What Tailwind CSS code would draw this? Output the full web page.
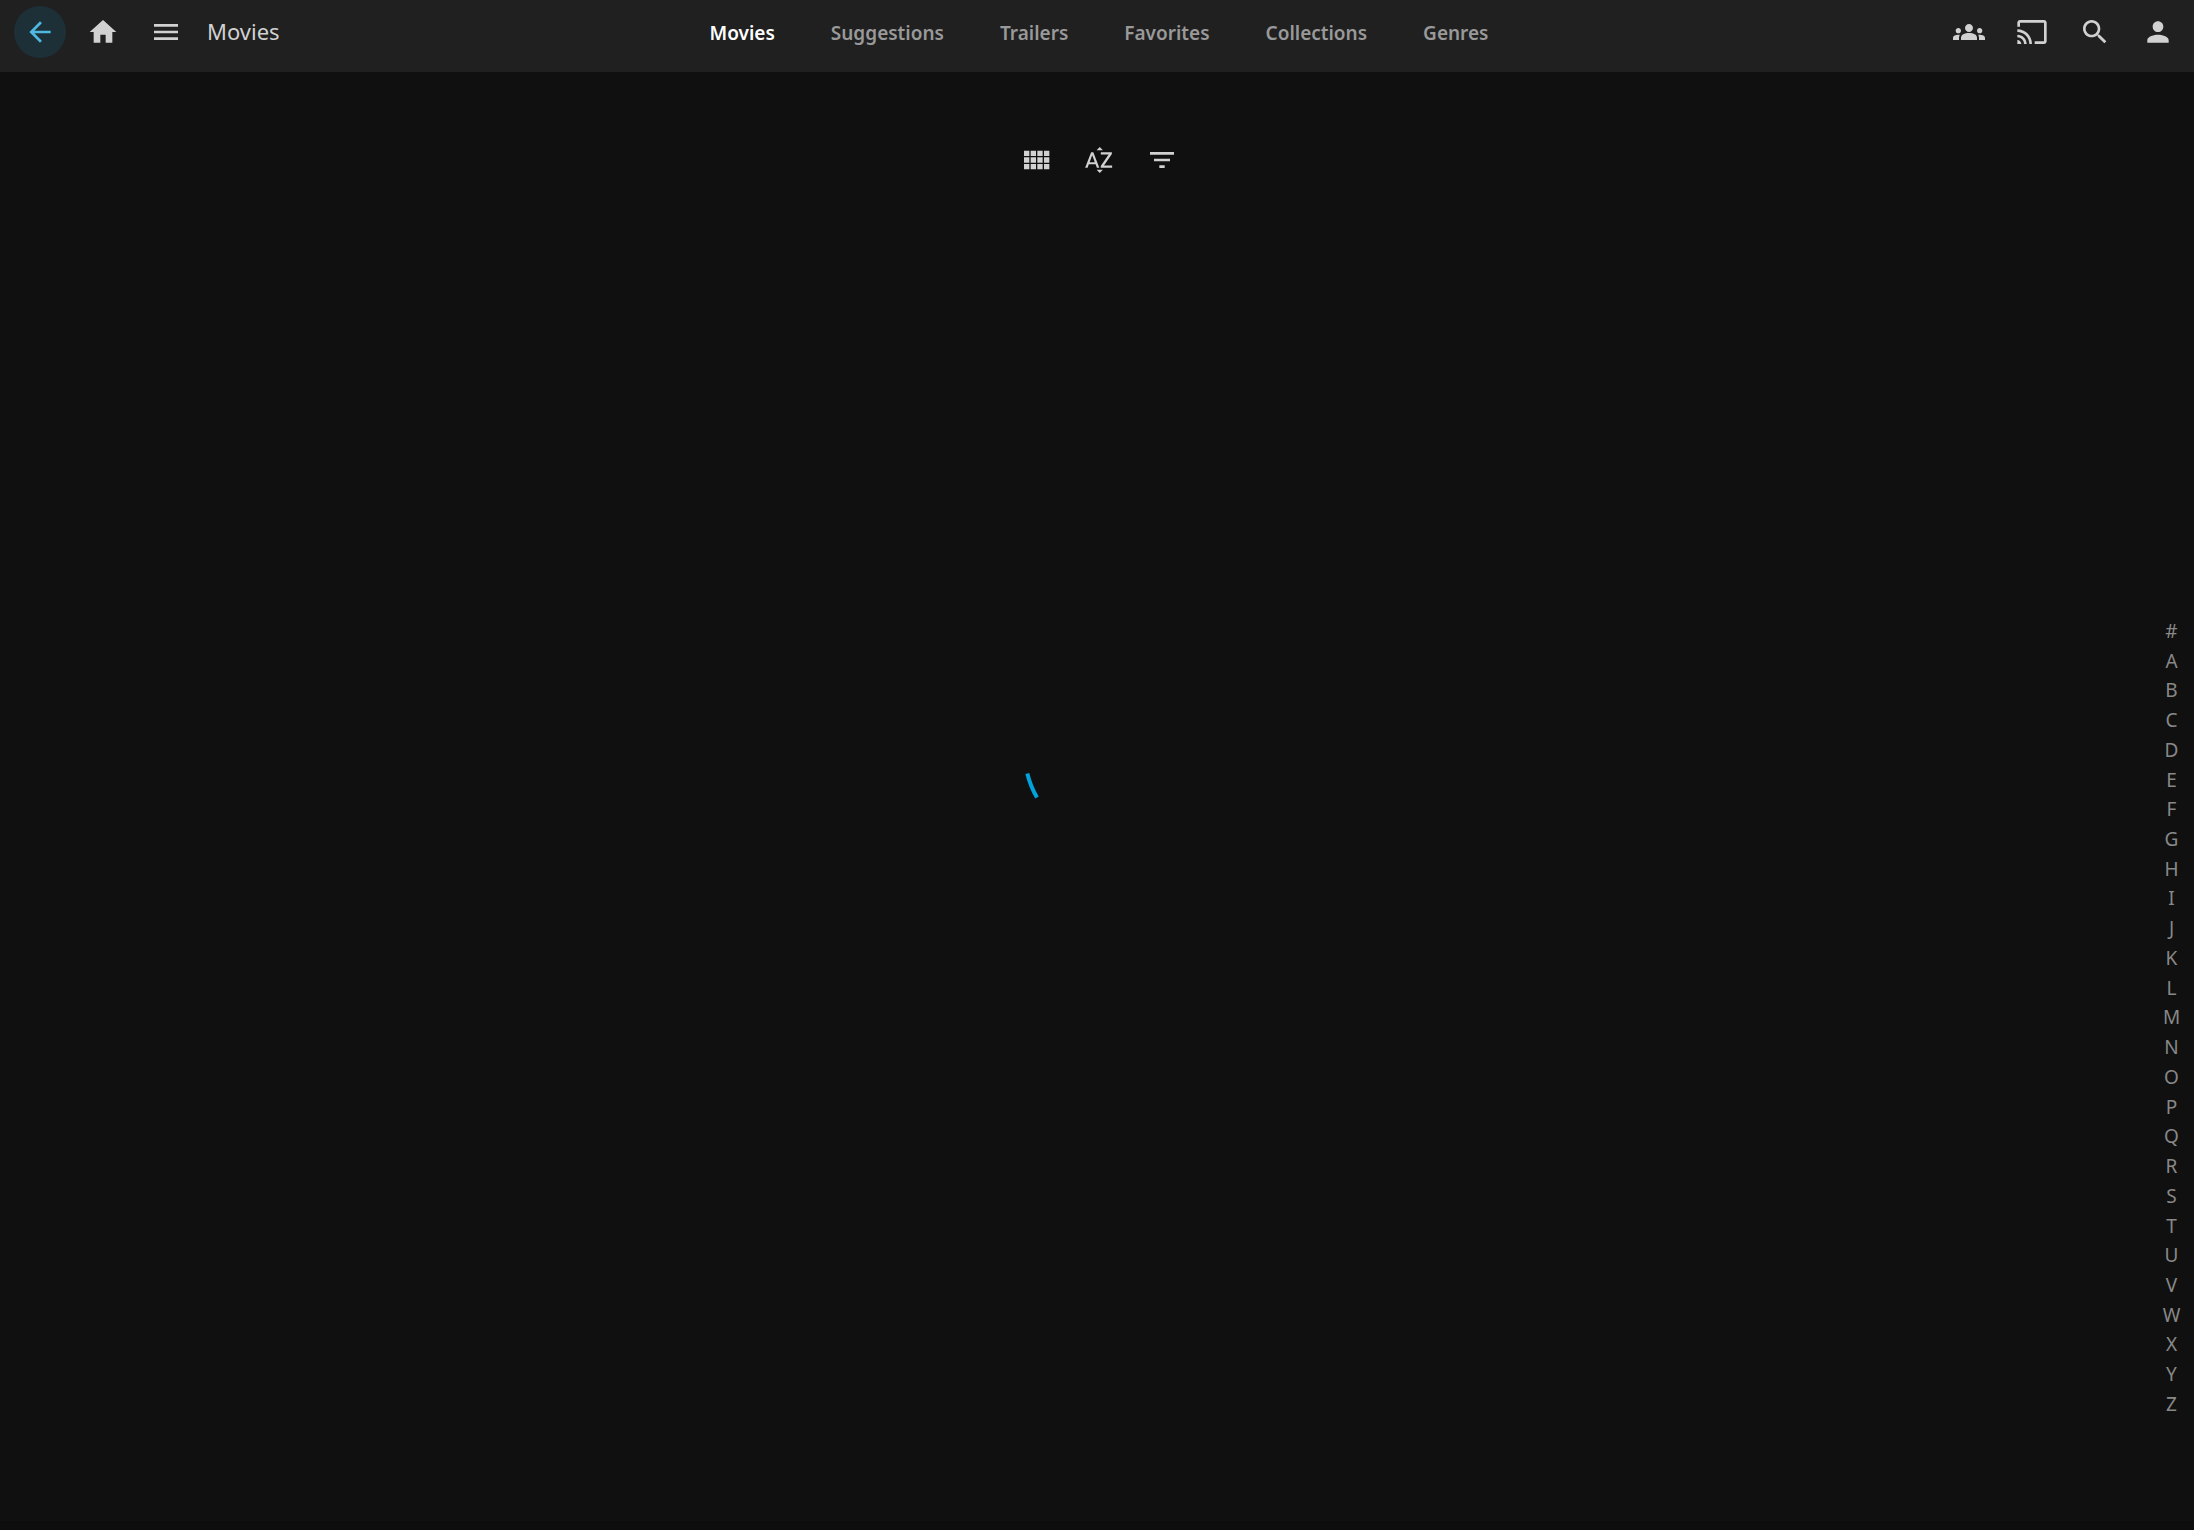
<!DOCTYPE html>
<html lang="en">
<head>
  <meta charset="UTF-8">
  <meta name="viewport" content="width=device-width, initial-scale=1.0">
  <title>Movies</title>
  <script src="https://cdn.jsdelivr.net/npm/@tailwindcss/browser@4"></script>
</head>
<body class="bg-[#101010] text-[#d1d1d1] font-['Noto_Sans',sans-serif] min-h-screen flex flex-col">

  <header class="bg-[#202020] h-[72px] pt-[6px] pl-[14px] pr-[10px] grid grid-cols-[1fr_auto_1fr] items-start">
    <div class="flex items-center gap-[11px]">
      <button type="button" aria-label="Back" class="size-[52px] rounded-full bg-[#1d3037] text-[#4fb8e0] flex items-center justify-center">
        <svg class="size-8" viewBox="0 0 24 24" fill="currentColor"><path d="M20 11H7.83l5.59-5.59L12 4l-8 8 8 8 1.41-1.41L7.83 13H20v-2z"/></svg>
      </button>
      <button type="button" aria-label="Home" class="size-[52px] rounded-full flex items-center justify-center">
        <svg class="size-8" viewBox="0 0 24 24" fill="currentColor"><path d="M10 20v-6h4v6h5v-8h3L12 3 2 12h3v8z"/></svg>
      </button>
      <button type="button" aria-label="Menu" class="size-[52px] rounded-full flex items-center justify-center">
        <svg class="size-8" viewBox="0 0 24 24" fill="currentColor"><path d="M3 18h18v-2H3v2zm0-5h18v-2H3v2zm0-7v2h18V6H3z"/></svg>
      </button>
      <h1 class="text-[22px] leading-8 pl-1 pb-[2px]">Movies</h1>
    </div>

    <nav class="flex h-[54px] items-center text-[19px] leading-7 font-semibold text-[#999999]">
      <a href="#" class="px-7 text-white">Movies</a>
      <a href="#" class="px-7">Suggestions</a>
      <a href="#" class="px-7">Trailers</a>
      <a href="#" class="px-7">Favorites</a>
      <a href="#" class="px-7">Collections</a>
      <a href="#" class="px-7">Genres</a>
    </nav>

    <div class="flex items-center justify-end gap-[11px]">
      <button type="button" aria-label="SyncPlay" class="size-[52px] rounded-full flex items-center justify-center">
        <svg class="size-8" viewBox="0 0 24 24" fill="currentColor"><path d="M12 12.75c1.63 0 3.07.39 4.24.9 1.08.48 1.76 1.56 1.76 2.73V18H6v-1.61c0-1.18.68-2.26 1.76-2.73 1.17-.52 2.61-.91 4.24-.91zM4 13c1.1 0 2-.9 2-2s-.9-2-2-2-2 .9-2 2 .9 2 2 2zm1.13 1.1c-.37-.06-.74-.1-1.13-.1-.99 0-1.93.21-2.78.58C.48 14.9 0 15.62 0 16.43V18h4.5v-1.61c0-.83.23-1.61.63-2.29zM20 13c1.1 0 2-.9 2-2s-.9-2-2-2-2 .9-2 2 .9 2 2 2zm4 3.43c0-.81-.48-1.53-1.22-1.85-.85-.37-1.79-.58-2.78-.58-.39 0-.76.04-1.13.1.4.68.63 1.46.63 2.29V18H24v-1.57zM12 6c1.66 0 3 1.34 3 3s-1.34 3-3 3-3-1.34-3-3 1.34-3 3-3z"/></svg>
      </button>
      <button type="button" aria-label="Cast" class="size-[52px] rounded-full flex items-center justify-center">
        <svg class="size-8" viewBox="0 0 24 24" fill="currentColor"><path d="M21 3H3c-1.1 0-2 .9-2 2v3h2V5h18v14h-7v2h7c1.1 0 2-.9 2-2V5c0-1.1-.9-2-2-2zM1 18v3h3c0-1.66-1.34-3-3-3zm0-4v2c2.76 0 5 2.24 5 5h2c0-3.87-3.13-7-7-7zm0-4v2c4.97 0 9 4.03 9 9h2c0-6.08-4.93-11-11-11z"/></svg>
      </button>
      <button type="button" aria-label="Search" class="size-[52px] rounded-full flex items-center justify-center">
        <svg class="size-8" viewBox="0 0 24 24" fill="currentColor"><path d="M15.5 14h-.79l-.28-.27C15.41 12.59 16 11.11 16 9.5 16 5.91 13.09 3 9.5 3S3 5.91 3 9.5 5.91 16 9.5 16c1.61 0 3.09-.59 4.23-1.57l.27.28v.79l5 4.99L20.49 19l-4.99-5zm-6 0C7.01 14 5 11.99 5 9.5S7.01 5 9.5 5 14 7.01 14 9.5 11.99 14 9.5 14z"/></svg>
      </button>
      <button type="button" aria-label="Profile" class="size-[52px] rounded-full flex items-center justify-center">
        <svg class="size-8" viewBox="0 0 24 24" fill="currentColor"><path d="M12 12c2.21 0 4-1.79 4-4s-1.79-4-4-4-4 1.79-4 4 1.79 4 4 4zm0 2c-2.67 0-8 1.34-8 4v2h16v-2c0-2.66-5.33-4-8-4z"/></svg>
      </button>
    </div>
  </header>

  <main class="flex-1 flex flex-col">
    <div class="flex justify-center gap-[11px] pt-[62px] pl-1">
      <button type="button" aria-label="View" class="size-[52px] rounded-full flex items-center justify-center">
        <svg class="size-8" viewBox="0 0 24 24" fill="currentColor"><path d="M3 9h4V5H3v4zm0 5h4v-4H3v4zm5 0h4v-4H8v4zm5 0h4v-4h-4v4zM8 9h4V5H8v4zm5-4v4h4V5h-4zm5 9h4v-4h-4v4zM3 19h4v-4H3v4zm5 0h4v-4H8v4zm5 0h4v-4h-4v4zm5 0h4v-4h-4v4zm0-14v4h4V5h-4z"/></svg>
      </button>
      <button type="button" aria-label="Sort" class="size-[52px] rounded-full flex items-center justify-center">
        <svg class="size-8" viewBox="0 0 24 24" fill="currentColor"><path d="M14.94 4.66h-4.72l2.36-2.36 2.36 2.36zm-4.69 14.71h4.66l-2.33 2.33-2.33-2.33zM6.1 6.27L1.6 17.73h1.84l.92-2.45h5.11l.92 2.45h1.84L7.74 6.27H6.1zm-1.13 7.37l1.94-5.18 1.94 5.18H4.97zm10.76 2.5h6.12v1.59h-8.53v-1.29l5.92-8.56h-5.88v-1.6h8.3v1.26l-5.93 8.6z"/></svg>
      </button>
      <button type="button" aria-label="Filter" class="size-[52px] rounded-full flex items-center justify-center">
        <svg class="size-8" viewBox="0 0 24 24" fill="currentColor"><path d="M10 18h4v-2h-4v2zM3 6v2h18V6H3zm3 7h12v-2H6v2z"/></svg>
      </button>
    </div>

    <nav id="alphabet" aria-label="Alphabet" class="mt-[430px] mb-[102px] flex-1 self-end w-[45px] flex flex-col text-[19px] leading-6 text-[#888888]"></nav>
  </main>

  <footer class="h-[9px] bg-[#0d0d0d]"></footer>

  <!-- loading spinner -->
  <div role="status" aria-label="Loading" class="fixed inset-0 flex items-center justify-center pointer-events-none">
    <svg class="size-[146px]" viewBox="0 0 146 146" fill="none" stroke="#00a4dc" stroke-width="4"><path d="M3.3 81.500A90 90 0 0 0 13 105.500"/></svg>
  </div>

  <script>
    const alphabet = document.getElementById("alphabet");
    for (const letter of "#ABCDEFGHIJKLMNOPQRSTUVWXYZ") {
      alphabet.innerHTML += `<a href="#" class="flex-1 flex items-center justify-center">${letter}</a>`;
    }
  </script>
</body>
</html>
